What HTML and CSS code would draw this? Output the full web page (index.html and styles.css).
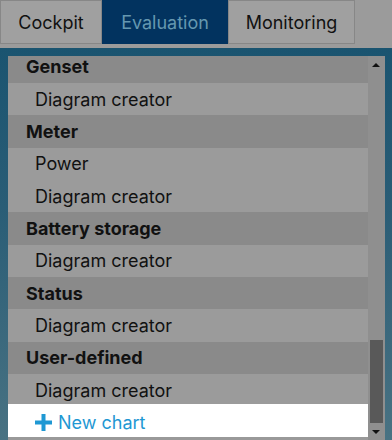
FILE: index.html
```html
<!DOCTYPE html>
<html>
<head>
<meta charset="utf-8">
<link rel="stylesheet" href="styles.css">
</head>
<body>
<div class="topbar">
  <div class="tab">Cockpit</div>
  <div class="tab active">Evaluation</div>
  <div class="tab">Monitoring</div>
</div>
<div class="stage">
  <div class="panel">
    <div class="main">
      <div class="list">
        <div class="inner">
          <div class="row head">Genset</div>
          <div class="row item">Diagram creator</div>
          <div class="row head">Meter</div>
          <div class="row item">Power</div>
          <div class="row item">Diagram creator</div>
          <div class="row head">Battery storage</div>
          <div class="row item">Diagram creator</div>
          <div class="row head">Status</div>
          <div class="row item">Diagram creator</div>
          <div class="row head">User-defined</div>
          <div class="row item">Diagram creator</div>
        </div>
      </div>
      <div class="row new">
        <svg class="plus" width="17" height="17" viewBox="0 0 17 17"><path d="M6.5 0h4v6.5H17v4h-6.5V17h-4v-6.5H0v-4h6.5z" fill="#1f98d3"/></svg>
        <span>New chart</span>
      </div>
    </div>
    <div class="scrollbar">
      <div class="arrow up"></div>
      <div class="track"><div class="thumb"></div></div>
      <div class="arrow down"></div>
    </div>
  </div>
</div>
</body>
</html>
```
FILE: styles.css
```css
html, body {
  margin: 0;
  padding: 0;
}
body {
  width: 392px;
  height: 440px;
  overflow: hidden;
  background: #9b9b9b;
  font-family: Inter, "Noto Sans", sans-serif;
  color: #111;
}
.topbar {
  height: 48px;
  display: flex;
  align-items: flex-start;
  background: #9b9b9b;
}
.tab {
  height: 44px;
  box-sizing: border-box;
  display: flex;
  align-items: center;
  justify-content: center;
  font-size: 18px;
  border: 1px solid #878787;
  background: #a0a0a0;
  color: #111;
}
.tab:nth-child(1) { width: 102px; }
.tab:nth-child(2) { width: 126px; }
.tab:nth-child(3) { width: 127px; }
.tab.active {
  background: #02335f;
  color: #6598b0;
  border-color: #02335f;
}
.stage {
  height: 392px;
  padding: 8px 7px 0 8px;
  background: linear-gradient(180deg, #1a5470 0%, #2a5d76 40%, #4a7383 100%);
}
.panel {
  height: 384px;
  display: flex;
  background: #8f8f8f;
}
.main {
  width: 360px;
  display: flex;
  flex-direction: column;
  padding-bottom: 3px;
  background: #999;
}
.list {
  flex: 1;
  overflow: hidden;
  min-height: 0;
}
.inner {
  margin-top: -5.3px;
}
.row {
  height: 32.33px;
  display: flex;
  align-items: center;
  font-size: 18px;
  box-sizing: border-box;
}
.head {
  background: #8a8a8a;
  font-weight: 700;
  padding-left: 18px;
}
.item {
  background: #9b9b9b;
  padding-left: 27px;
}
.new {
  flex: none;
  height: 33px;
  background: #ffffff;
  padding-left: 27px;
  padding-top: 3px;
  color: #1f98d3;
  width: 362px;
  gap: 6px;
}
.plus { flex: none; }
.scrollbar {
  width: 16px;
  display: flex;
  flex-direction: column;
  background: #8f8f8f;
}
.arrow {
  height: 17px;
  display: flex;
  align-items: center;
  justify-content: center;
}
.arrow.up::before {
  content: "";
  border-left: 4px solid transparent;
  border-right: 4px solid transparent;
  border-bottom: 4px solid #111;
}
.arrow.down::before {
  content: "";
  border-left: 4px solid transparent;
  border-right: 4px solid transparent;
  border-top: 4px solid #111;
}
.track {
  flex: 1;
  display: flex;
  flex-direction: column;
  justify-content: flex-end;
  padding: 0 1px 0 2px;
}
.thumb {
  height: 83px;
  background: #595959;
}
```
